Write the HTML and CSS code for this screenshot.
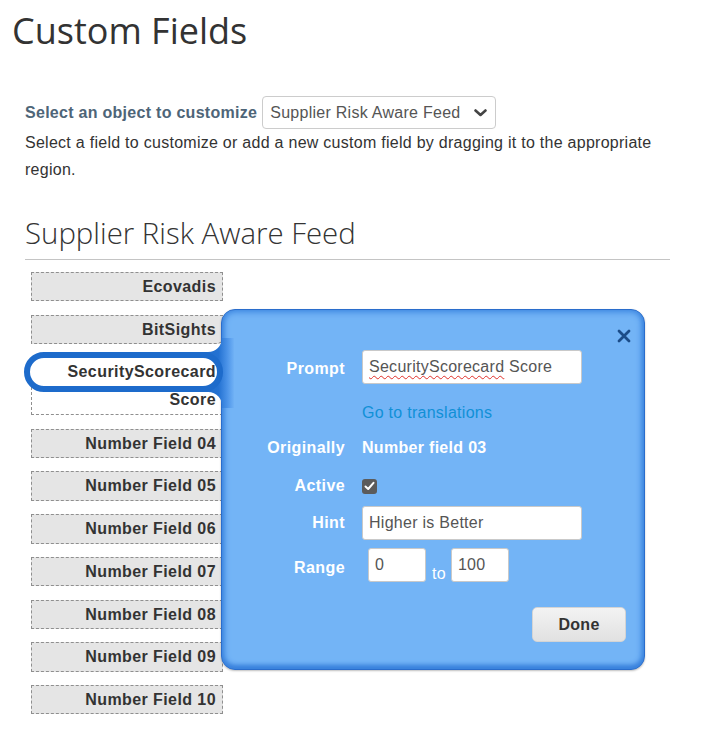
FILE: index.html
```html
<!DOCTYPE html>
<html lang="en">
<head>
<meta charset="utf-8">
<title>Custom Fields</title>
<link rel="stylesheet" href="styles.css">
</head>
<body>
  <h1 class="title">Custom Fields</h1>
  <div class="content">
    <div class="object-row">
      <span class="object-label">Select an object to customize</span>
      <div class="select">
        <span>Supplier Risk Aware Feed</span>
        <svg class="chev" width="13" height="8" viewBox="0 0 13 8"><path d="M1.5 1.5 L6.5 6 L11.5 1.5" fill="none" stroke="#444" stroke-width="2.6" stroke-linecap="round" stroke-linejoin="round"/></svg>
      </div>
    </div>
    <p class="intro">Select a field to customize or add a new custom field by dragging it to the appropriate region.</p>
    <h2 class="section">Supplier Risk Aware Feed</h2>

    <div class="field-list">
      <div class="field">Ecovadis</div>
      <div class="field before-sel">BitSights</div>
      <div class="field selected">
        <svg class="connector" width="34" height="78" viewBox="0 0 34 78">
          <defs>
            <linearGradient id="cg" x1="0" y1="0" x2="1" y2="0">
              <stop offset="0" stop-color="#1d6ccc"/>
              <stop offset="0.55" stop-color="#2472d2"/>
              <stop offset="0.8" stop-color="#4b93e8"/>
              <stop offset="1" stop-color="#70b1f5"/>
            </linearGradient>
          </defs>
          <path d="M0 18 L8 18 A14 14 0 0 0 22 4 L34 4 L34 74 L22 74 A14 14 0 0 0 8 58 L0 58 Z" fill="url(#cg)"/>
        </svg>
        <span class="pill"></span>
        <span class="field-text">SecurityScorecard Score</span>
      </div>
      <div class="field">Number Field 04</div>
      <div class="field">Number Field 05</div>
      <div class="field">Number Field 06</div>
      <div class="field">Number Field 07</div>
      <div class="field">Number Field 08</div>
      <div class="field">Number Field 09</div>
      <div class="field">Number Field 10</div>

      <div class="popup">
        <svg class="close" width="14" height="14" viewBox="0 0 14 14"><path d="M2 2 L12 12 M12 2 L2 12" stroke="#1b4c88" stroke-width="2.8" stroke-linecap="round"/></svg>
        <div class="prow prow-prompt">
          <span class="plabel lower">Prompt</span>
          <div class="input wide"><span class="misspelt">SecurityScorecard</span>&nbsp;Score</div>
        </div>
        <div class="prow prow-link">
          <span class="plabel"></span>
          <a class="link" href="#">Go to translations</a>
        </div>
        <div class="prow prow-orig">
          <span class="plabel">Originally</span>
          <span class="pvalue">Number field 03</span>
        </div>
        <div class="prow prow-active">
          <span class="plabel">Active</span>
          <span class="checkbox"><svg width="11" height="10" viewBox="0 0 11 10"><path d="M1.5 5.5 L4.2 8 L9.5 1.8" fill="none" stroke="#fff" stroke-width="2" stroke-linecap="round" stroke-linejoin="round"/></svg></span>
        </div>
        <div class="prow prow-hint">
          <span class="plabel">Hint</span>
          <div class="input wide">Higher is Better</div>
        </div>
        <div class="prow prow-range">
          <span class="plabel lowest">Range</span>
          <div class="range">
            <div class="input small first">0</div>
            <span class="to">to</span>
            <div class="input small">100</div>
          </div>
        </div>
        <div class="actions">
          <button class="done" type="button">Done</button>
        </div>
      </div>
    </div>
  </div>
</body>
</html>
```
FILE: styles.css
```css
body {
  margin: 0;
  font-family: "Liberation Sans", Arial, sans-serif;
  font-size: 16px;
  letter-spacing: 0.27px;
  color: #333;
  background: #fff;
}

.title {
  margin: 0;
  padding: 6px 0 0 12px;
  font-family: "Open Sans", sans-serif;
  font-weight: 400;
  font-size: 36px;
  line-height: 49px;
  letter-spacing: 0;
  color: #333;
}

.content {
  margin: 41px 0 0 25px;
  width: 645px;
}

.object-row {
  display: flex;
  align-items: center;
  gap: 5px;
  height: 33px;
}

.object-label {
  font-weight: bold;
  letter-spacing: 0.28px;
  color: #4e6578;
}

.select {
  width: 234px;
  height: 33px;
  box-sizing: border-box;
  border: 1px solid #ccc;
  border-radius: 4px;
  display: flex;
  align-items: center;
  justify-content: space-between;
  padding: 0 8px 0 7px;
  color: #555;
}

.chev {
  margin-top: 1px;
}

.intro {
  margin: 0;
  line-height: 27px;
  color: #333;
}

.section {
  margin: 30px 0 0 0;
  padding-bottom: 6px;
  font-family: "Open Sans", sans-serif;
  font-weight: 300;
  font-size: 29.4px;
  line-height: 40px;
  letter-spacing: 0;
  color: #333;
  border-bottom: 1px solid #c4c4c4;
}

.field-list {
  position: relative;
  margin: 12px 0 0 6px;
}

.field {
  width: 192px;
  box-sizing: border-box;
  border: 1px dashed #8f8f8f;
  background: #e5e5e5;
  text-align: right;
  padding-right: 6px;
  font-weight: bold;
  letter-spacing: 0.42px;
  line-height: 27.4px;
  margin-bottom: 13.3px;
  color: #333;
}

.field.before-sel {
  border-bottom-right-radius: 6px;
}

.field.selected {
  position: relative;
  background: #fff;
  border-right-color: #fff;
  line-height: 28px;
}

.connector {
  position: absolute;
  left: 168px;
  top: -24px;
  z-index: 2;
}

.pill {
  position: absolute;
  left: -8px;
  top: -6px;
  width: 199px;
  height: 40px;
  box-sizing: border-box;
  border: 6px solid #1d6bcb;
  border-radius: 20px;
  background: #fff;
  z-index: 3;
}

.field-text {
  position: relative;
  z-index: 4;
}

.popup {
  position: absolute;
  left: 190px;
  top: 37px;
  width: 424px;
  height: 361px;
  box-sizing: border-box;
  padding: 40px 18px 0 19px;
  background: #73b4f6;
  border: 1px solid #2a6dcc;
  border-radius: 14px;
  box-shadow: inset 0 0 6px 2px #3c86e0, inset 0 -3px 5px #2e74d4, 0 1px 2px rgba(0, 0, 0, 0.25);
  z-index: 1;
}

.close {
  position: absolute;
  top: 19px;
  right: 13px;
}

.prow {
  display: grid;
  grid-template-columns: 104px 1fr;
  column-gap: 17px;
  align-items: center;
}

.plabel {
  text-align: right;
  font-weight: bold;
  letter-spacing: 0.4px;
  color: #fff;
  line-height: 20px;
}

.plabel.lower {
  padding-top: 4px;
}

.plabel.lowest {
  padding-top: 6px;
}

.prow-prompt { height: 34px; }
.prow-link { margin-top: 19px; line-height: 20px; }
.prow-orig { margin-top: 15px; line-height: 20px; }
.prow-active { margin-top: 18px; height: 20px; }
.prow-hint { margin-top: 10px; height: 34px; }
.prow-range { margin-top: 8px; height: 34px; }

.pvalue {
  font-weight: bold;
  letter-spacing: 0.3px;
  color: #fff;
}

.link {
  color: #1090d6;
  text-decoration: none;
}

.input {
  height: 34px;
  box-sizing: border-box;
  border: 1px solid #c9c9c9;
  border-radius: 3px;
  background: #fff;
  color: #555;
  padding-left: 6px;
  display: flex;
  align-items: center;
  white-space: nowrap;
}

.input.wide {
  width: 220px;
}

.misspelt {
  text-decoration: underline wavy #e0302a;
  text-decoration-thickness: 1px;
  text-underline-offset: 3px;
}

.checkbox {
  width: 15px;
  height: 15px;
  border-radius: 3px;
  background: #5b5b5b;
  display: flex;
  align-items: center;
  justify-content: center;
}

.range {
  display: flex;
  align-items: flex-end;
}

.input.small {
  width: 58px;
}

.input.first {
  margin-left: 6px;
}

.to {
  color: #fff;
  line-height: 16px;
  margin: 0 5px 0 6px;
}

.actions {
  margin-top: 25px;
  display: flex;
  justify-content: flex-end;
}

.done {
  width: 94px;
  height: 35px;
  border: 1px solid #d4d4d4;
  border-radius: 5px;
  background: linear-gradient(#f3f3f3, #e1e1e1);
  font-family: "Liberation Sans", Arial, sans-serif;
  font-weight: bold;
  font-size: 16px;
  letter-spacing: 0.3px;
  color: #333;
  padding: 0;
}
```
